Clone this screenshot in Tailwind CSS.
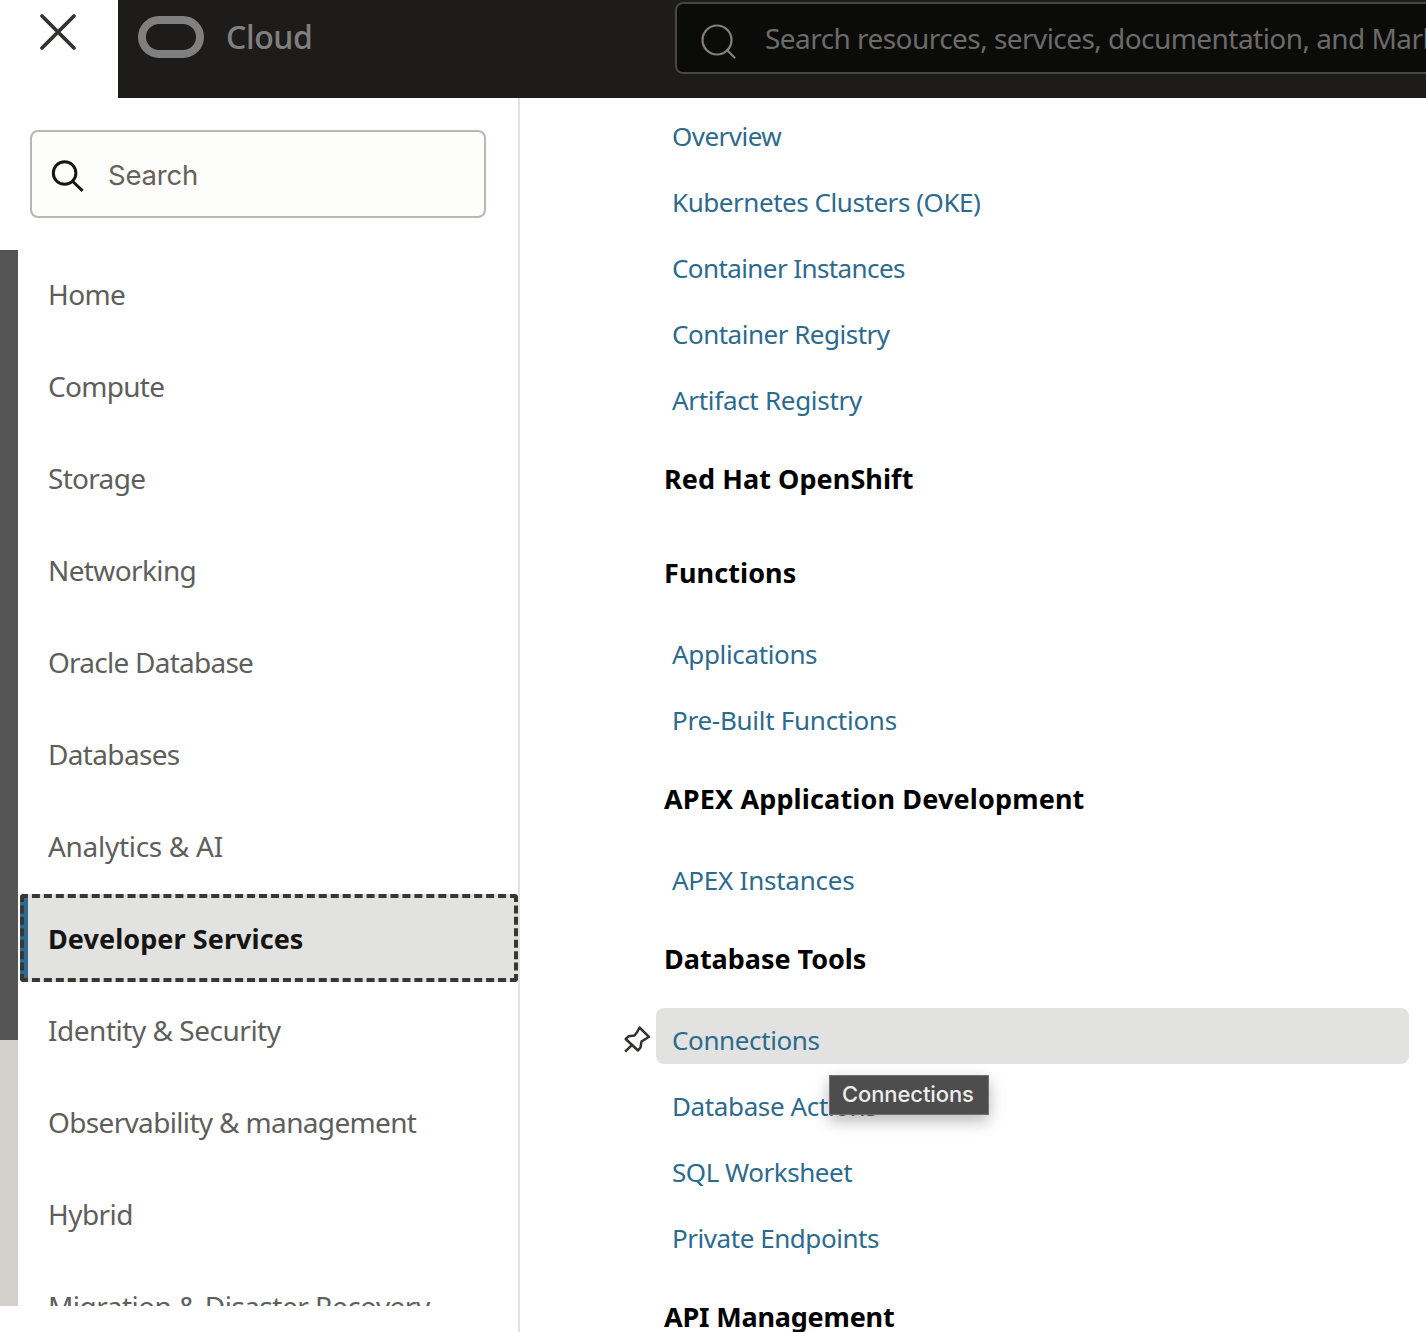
<!DOCTYPE html>
<html lang="en">
<head>
<meta charset="utf-8">
<title>Cloud Console</title>
<script src="https://cdn.jsdelivr.net/npm/@tailwindcss/browser@4"></script>
</head>
<body class="w-[1426px] h-[1332px] overflow-hidden bg-white flex flex-col font-['Noto_Sans',sans-serif]">
<header class="flex h-[98px] shrink-0 overflow-hidden">
  <button class="w-[118px] h-full bg-white shrink-0 pl-[38px] pt-[12px] flex items-start">
    <svg class="w-10 h-10" viewBox="0 0 40 40" fill="none" stroke="#35322d" stroke-width="3.8" stroke-linecap="round"><path d="M4 4L36 36M36 4L4 36"/></svg>
  </button>
  <div class="flex flex-1 bg-[#1e1c1a] min-w-0">
    <div class="w-[557px] shrink-0 flex items-start pl-5 pt-4">
      <div class="w-[66px] h-[42px] rounded-full border-8 border-[#808080]"></div>
      <span class="ml-[22px] leading-[42px] text-[32px] font-medium tracking-[-0.4px] text-[#808080]">Cloud</span>
    </div>
    <div class="w-[900px] shrink-0 h-[72px] mt-[2px] rounded-lg border-2 border-[#474644] bg-[#0b0b09] flex items-center whitespace-nowrap">
      <svg class="w-10 h-10 ml-[22px] mt-2" viewBox="0 0 40 40" fill="none" stroke="#85827e" stroke-width="2.2" stroke-linecap="round"><circle cx="18" cy="18" r="14.5"/><path d="M28.500 28.500L35.500 35.500"/></svg>
      <span class="ml-[26px] text-[28px] tracking-[-0.55px] text-[#6c6b69]">Search resources, services, documentation, and Marketplace</span>
    </div>
  </div>
</header>
<div class="flex flex-1 min-h-0">
  <nav class="w-[520px] shrink-0 border-r-2 border-[#e2e2e1] flex flex-col">
    <div class="ml-[30px] mt-8 w-[456px] h-[88px] rounded-lg border-2 border-[#bab6b1] bg-[#fdfdfb] flex items-center shrink-0">
      <svg class="w-9 h-9 ml-[18px] mt-[6px]" viewBox="0 0 36 36" fill="none" stroke="#161513" stroke-width="3"><circle cx="14.600" cy="14" r="11.300"/><path d="M22.300 22L32.600 31.800"/></svg>
      <span class="ml-[22px] mt-[3px] font-[Inter] text-[27.500px] tracking-[-0.2px] text-[#67615c]">Search</span>
    </div>
    <div class="mt-8 h-[1056px] flex shrink-0 overflow-hidden">
      <div class="w-[18px] shrink-0 bg-[#d4d0cb]"><div class="h-[790px] bg-[#555555]"></div></div>
      <ul class="ml-[2px] w-[498px] shrink-0 flex flex-col gap-1 text-[28px] text-[#5e5e5c] whitespace-nowrap">
        <li class="h-[88px] shrink-0 pl-7 flex items-center tracking-[-0.6px]">Home</li>
        <li class="h-[88px] shrink-0 pl-7 flex items-center tracking-[-0.7px]">Compute</li>
        <li class="h-[88px] shrink-0 pl-7 flex items-center tracking-[-0.7px]">Storage</li>
        <li class="h-[88px] shrink-0 pl-7 flex items-center tracking-[-0.62px]">Networking</li>
        <li class="h-[88px] shrink-0 pl-7 flex items-center tracking-[-0.75px]">Oracle Database</li>
        <li class="h-[88px] shrink-0 pl-7 flex items-center tracking-[-0.66px]">Databases</li>
        <li class="h-[88px] shrink-0 pl-7 flex items-center tracking-[-0.3px]">Analytics &amp; AI</li>
        <li class="h-[88px] shrink-0 pl-5 pt-[2px] flex items-center bg-[#e2e2e1] rounded-[4px] border-l-8 border-[#2c6a8e] outline-4 outline-dashed outline-[#3a3631] -outline-offset-4 font-bold text-[27px] text-[#161513] tracking-[0.07px]">Developer Services</li>
        <li class="h-[88px] shrink-0 pl-7 flex items-center tracking-[-0.48px]">Identity &amp; Security</li>
        <li class="h-[88px] shrink-0 pl-7 flex items-center tracking-[-0.66px]">Observability &amp; management</li>
        <li class="h-[88px] shrink-0 pl-7 flex items-center tracking-[-0.55px]">Hybrid</li>
        <li class="h-[88px] shrink-0 pl-7 flex items-center tracking-[-0.53px]">Migration &amp; Disaster Recovery</li>
      </ul>
    </div>
  </nav>
  <main class="flex-1 min-w-0 overflow-hidden pl-[136px] pr-[17px] pt-[6px] whitespace-nowrap text-[26px] text-[#2c6a8e]">
    <a class="h-14 pl-4 pt-2 flex items-center tracking-[-0.53px]">Overview</a>
    <a class="h-14 mt-[10px] pl-4 pt-2 flex items-center tracking-[-0.45px]">Kubernetes Clusters (OKE)</a>
    <a class="h-14 mt-[10px] pl-4 pt-2 flex items-center tracking-[-0.59px]">Container Instances</a>
    <a class="h-14 mt-[10px] pl-4 pt-2 flex items-center tracking-[-0.5px]">Container Registry</a>
    <a class="h-14 mt-[10px] pl-4 pt-2 flex items-center tracking-[-0.3px]">Artifact Registry</a>
    <h2 class="h-[94px] pl-2 pt-[17px] flex items-center text-[27px] font-bold text-black tracking-[0.07px]">Red Hat OpenShift</h2>
    <h2 class="h-[94px] pl-2 pt-[17px] flex items-center text-[27px] font-bold text-black tracking-[0.08px]">Functions</h2>
    <a class="h-14 mt-[10px] pl-4 pt-2 flex items-center tracking-[-0.35px]">Applications</a>
    <a class="h-14 mt-[10px] pl-4 pt-2 flex items-center tracking-[-0.27px]">Pre-Built Functions</a>
    <h2 class="h-[94px] pl-2 pt-[17px] flex items-center text-[27px] font-bold text-black tracking-[0.14px]">APEX Application Development</h2>
    <a class="h-14 mt-[10px] pl-4 pt-2 flex items-center tracking-[-0.24px]">APEX Instances</a>
    <h2 class="h-[94px] pl-2 pt-[17px] flex items-center text-[27px] font-bold text-black tracking-[-0.03px]">Database Tools</h2>
    <a class="relative h-14 mt-[10px] pl-4 pt-2 flex items-center rounded-lg bg-[#e2e2e1] tracking-[-0.38px]">Connections
      <svg class="absolute -left-[34px] top-[16px] w-[30px] h-[30px]" viewBox="0 0 30 30" fill="none" stroke="#35322d" stroke-width="2.5" stroke-linejoin="round"><path d="M17.500 3.500L27 12.800L23.500 15L19.500 17.500L18.500 23.500L16 26.500L3.700 15L6.500 12.300L12.500 11.500L15.200 8L17.500 3.500ZM10.300 20.700L3.200 27.700"/></svg>
      <span class="absolute z-10 left-[173px] top-[67px] w-[160px] h-10 border border-[#727272] bg-[#4d4d4d] shadow-[0_6px_16px_rgba(0,0,0,0.28)] pl-3 pb-[2px] flex items-center font-[Inter] text-[22px] font-medium tracking-[-0.1px] text-[#ececec]">Connections</span>
    </a>
    <a class="h-14 mt-[10px] pl-4 pt-2 flex items-center tracking-[-0.38px]">Database Actions</a>
    <a class="h-14 mt-[10px] pl-4 pt-2 flex items-center tracking-[-0.47px]">SQL Worksheet</a>
    <a class="h-14 mt-[10px] pl-4 pt-2 flex items-center tracking-[-0.45px]">Private Endpoints</a>
    <h2 class="h-[94px] pl-2 pt-[17px] flex items-center text-[27px] font-bold text-black tracking-[-0.2px]">API Management</h2>
  </main>
</div>
</body>
</html>
